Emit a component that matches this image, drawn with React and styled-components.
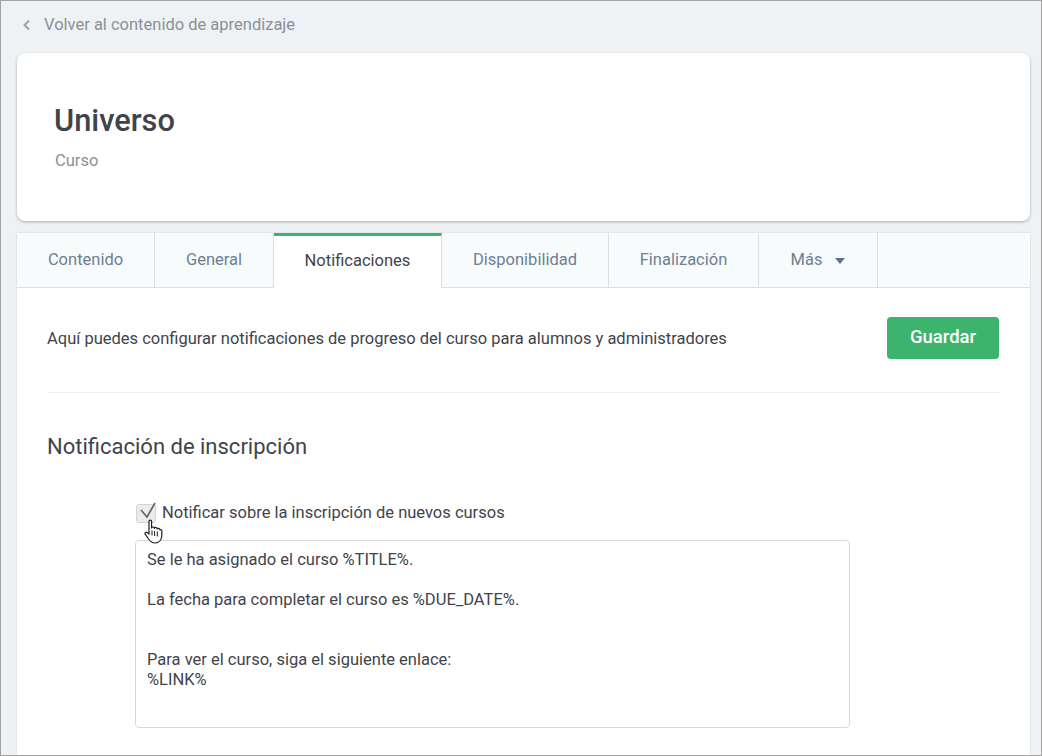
import React from "react";
import styled, { createGlobalStyle } from "styled-components";

const GlobalStyle = createGlobalStyle`
  html, body {
    margin: 0;
    padding: 0;
    background: #eff2f5;
  }
  * {
    box-sizing: border-box;
  }
`;

const Frame = styled.div`
  width: 1042px;
  height: 756px;
  overflow: hidden;
  display: flex;
  flex-direction: column;
  padding: 0 11px 0 16px;
  background: #eff2f5;
  border: 1px solid #a3a3a3;
  font-family: Roboto, "Liberation Sans", sans-serif;
  color: #3f444b;
`;

const BackLink = styled.a`
  display: flex;
  align-items: center;
  height: 52px;
  padding: 0 0 5px 5px;
  gap: 13px;
  font-size: 16.5px;
  color: #8b9096;
`;

const HeaderCard = styled.div`
  height: 168px;
  flex: none;
  padding: 48px 37px 0;
  background: #fff;
  border-radius: 8px;
  box-shadow: 0 1px 3px rgba(60, 64, 70, 0.4);
`;

const Title = styled.h1`
  margin: 0;
  font-size: 30.8px;
  line-height: 40px;
  font-weight: 500;
  color: #3f444b;
`;

const Subtitle = styled.div`
  margin: 10px 0 0 1px;
  font-size: 16.5px;
  line-height: 20px;
  color: #8b9096;
`;

const Panel = styled.div`
  flex: 1;
  margin-top: 12px;
  background: #fff;
  box-shadow: 0 0 2px rgba(60, 64, 70, 0.2);
`;

const TabBar = styled.div`
  display: flex;
  height: 55px;
  background: #f7fbfc;
  border-bottom: 1px solid #dcdfe2;
`;

const Tab = styled.div`
  display: flex;
  align-items: center;
  justify-content: center;
  gap: 13px;
  flex: none;
  width: ${(p) => p.$width}px;
  height: ${(p) => (p.$active ? 55 : 54)}px;
  padding-bottom: ${(p) => (p.$active ? 4 : 1)}px;
  font-size: 16.5px;
  color: ${(p) => (p.$active ? "#3f444b" : "#6d7f92")};
  background: ${(p) => (p.$active ? "#fff" : "transparent")};
  border-right: 1px solid #dcdfe2;
  border-top: ${(p) => (p.$active ? "3px solid #3cb46e" : "none")};
`;

const Caret = styled.span`
  width: 0;
  height: 0;
  margin-top: 3px;
  border-left: 5.5px solid transparent;
  border-right: 5.5px solid transparent;
  border-top: 6px solid #62748a;
`;

const Body = styled.div`
  padding: 29px 31px 0 30px;
`;

const IntroRow = styled.div`
  display: flex;
  align-items: center;
  justify-content: space-between;
  padding-bottom: 33px;
  border-bottom: 1px solid #eceeef;
  font-size: 16.5px;
  color: #3f444b;
`;

const SaveButton = styled.button`
  width: 112px;
  height: 42px;
  padding: 0 0 3px;
  border: none;
  border-radius: 4px;
  background: #3cb46e;
  color: #fff;
  font-family: inherit;
  font-size: 18.5px;
  font-weight: 500;
`;

const SectionTitle = styled.h2`
  margin: 40px 0 0;
  font-size: 22px;
  line-height: 28px;
  font-weight: 400;
  color: #3f444b;
`;

const Form = styled.div`
  margin: 39px 0 0 88px;
  width: 715px;
`;

const CheckRow = styled.label`
  position: relative;
  display: flex;
  align-items: center;
  gap: 6px;
  height: 24px;
  font-size: 16.5px;
  color: #3f444b;
`;

const CheckBox = styled.span`
  position: relative;
  flex: none;
  width: 20px;
  height: 19px;
  margin: 2px 0 0 1px;
  background: #ececec;
  border: 1px solid #d4d4d4;
  border-radius: 3px;
`;

const CheckMark = styled.svg`
  position: absolute;
  left: 0;
  top: -6px;
`;

const HandCursor = styled.svg`
  position: absolute;
  left: 9px;
  top: 19px;
`;

const MessageBox = styled.div`
  margin-top: 16px;
  height: 188px;
  padding: 9px 11px;
  border: 1px solid #d6d8da;
  border-radius: 4px;
  background: #fff;
  font-size: 16.5px;
  line-height: 20px;
  color: #3f444b;
  white-space: pre-line;
`;

const tabs = [
  { label: "Contenido", width: 138 },
  { label: "General", width: 119 },
  { label: "Notificaciones", width: 168, active: true },
  { label: "Disponibilidad", width: 167 },
  { label: "Finalización", width: 150 },
  { label: "Más", width: 119, caret: true },
];

const message = `Se le ha asignado el curso %TITLE%.

La fecha para completar el curso es %DUE_DATE%.


Para ver el curso, siga el siguiente enlace:
%LINK%`;

export default function App() {
  return (
    <Frame>
      <GlobalStyle />
      <BackLink>
        <svg width="9" height="12" viewBox="0 0 9 12" fill="none">
          <path d="M7 1.5 2.5 6 7 10.5" stroke="#9a9fa5" strokeWidth="1.8" />
        </svg>
        Volver al contenido de aprendizaje
      </BackLink>
      <HeaderCard>
        <Title>Universo</Title>
        <Subtitle>Curso</Subtitle>
      </HeaderCard>
      <Panel>
        <TabBar>
          {tabs.map((t) => (
            <Tab key={t.label} $width={t.width} $active={t.active}>
              {t.label}
              {t.caret && <Caret />}
            </Tab>
          ))}
        </TabBar>
        <Body>
          <IntroRow>
            Aquí puedes configurar notificaciones de progreso del curso para alumnos y administradores
            <SaveButton>Guardar</SaveButton>
          </IntroRow>
          <SectionTitle>Notificación de inscripción</SectionTitle>
          <Form>
            <CheckRow>
              <CheckBox>
                <CheckMark width="20" height="22" viewBox="0 0 20 22" fill="none">
                  <path d="M4 11 10 18 18 4" stroke="#63676c" strokeWidth="1.7" />
                </CheckMark>
              </CheckBox>
              Notificar sobre la inscripción de nuevos cursos
              <HandCursor width="19" height="25" viewBox="0 0 19 25">
                <path
                  d="M5 13V2.400C5 .8 7.600 .8 7.600 2.400V9C8 7.600 10.200 7.600 10.400 9.400 10.800 8 13 8 13.200 10 13.600 9 15.800 9 16 11 16.800 10.200 17.800 11 17.800 12V17C17.500 20 15.500 24 11 24 7.500 24 6 22 4.500 20L1.200 15.200C.4 13.800 2.200 12.600 3.400 13.600L5 15.200Z"
                  fill="#fff"
                  stroke="#1c1c1c"
                  strokeWidth="1.200"
                  strokeLinejoin="round"
                />
                <path d="M8 11.500v5M10.600 12v5M13.300 12.500v5" stroke="#1c1c1c" strokeWidth="1" />
              </HandCursor>
            </CheckRow>
            <MessageBox>{message}</MessageBox>
          </Form>
        </Body>
      </Panel>
    </Frame>
  );
}
